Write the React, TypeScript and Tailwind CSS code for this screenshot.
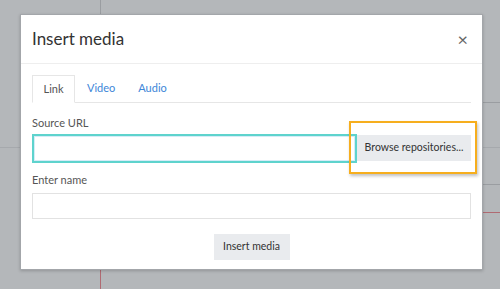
import React from 'react';

export default function App() {
  return (
    <div
      className="relative h-[289px] w-[500px] overflow-hidden bg-[#b4b7ba] pt-[14px] pl-[20px]"
      style={{ fontFamily: 'Lato, "Open Sans", sans-serif' }}
    >
      {/* page behind the modal */}
      <div className="absolute left-[100px] top-0 h-[289px] w-px bg-[#9a9da1]" />
      <div className="absolute left-[100px] top-[270px] h-[19px] w-px bg-[#b06a72]" />
      <div className="absolute left-0 top-[147px] h-px w-[20px] bg-[#a6a9ad]" />
      <div className="absolute left-[483px] top-[102px] h-px w-[17px] bg-[#9a9da1]" />
      <div className="absolute left-[483px] top-[147px] h-px w-[17px] bg-[#a6a9ad]" />
      <div className="absolute left-[483px] top-[184px] h-px w-[17px] bg-[#9a9da1]" />
      <div className="absolute left-[483px] top-[212px] h-px w-[17px] bg-[#b06a72]" />

      <div className="relative h-[256px] w-[463px] border border-[#a3a6aa] bg-white shadow-[0_1px_3px_rgba(0,0,0,0.2)]">
        <div className="flex h-[49px] items-center justify-between border-b border-[#eeeeee] pl-[11px] pr-[14px]">
          <h1 className="text-[17px] text-[#333]">Insert media</h1>
          <span className="text-[18px] leading-none text-[#666]">×</span>
        </div>

        <div className="px-[11px] pt-[11px]">
          <div className="flex h-[28px] items-end border-b border-[#e6e6e6] text-[11px]">
            <div className="-mb-px flex h-[28px] w-[43px] items-center justify-center border border-b-white border-[#e6e6e6] bg-white text-[#555]">
              Link
            </div>
            <div className="flex h-[28px] items-center pl-[12px] pr-[23px] text-[#3d86d8]">Video</div>
            <div className="flex h-[28px] items-center text-[#3d86d8]">Audio</div>
          </div>

          <div className="mt-[12px] text-[11px] text-[#555]">Source URL</div>
          <div className="relative mt-[2px] flex items-center">
            <div className="h-[29px] w-[325px] border-2 border-[#5ed3cd] bg-white shadow-[inset_0_0_0_1px_#d5ecf7]" />
            <button className="h-[26px] flex-1 bg-[#e9ebee] text-[10.5px] text-[#333]">
              Browse repositories...
            </button>
            <div className="absolute left-[317px] top-[-13px] h-[53px] w-[128px] border-2 border-[#f6ae1e] shadow-[1px_2px_3px_rgba(0,0,0,0.25)]" />
          </div>

          <div className="mt-[9px] text-[11px] text-[#555]">Enter name</div>
          <div className="mt-[5px] h-[26px] w-full border border-[#e2e2e2] bg-white" />

          <div className="mt-[15px] flex justify-center">
            <button className="h-[26px] w-[76px] bg-[#e9ebee] text-[10.5px] text-[#333]">Insert media</button>
          </div>
        </div>
      </div>
    </div>
  );
}
